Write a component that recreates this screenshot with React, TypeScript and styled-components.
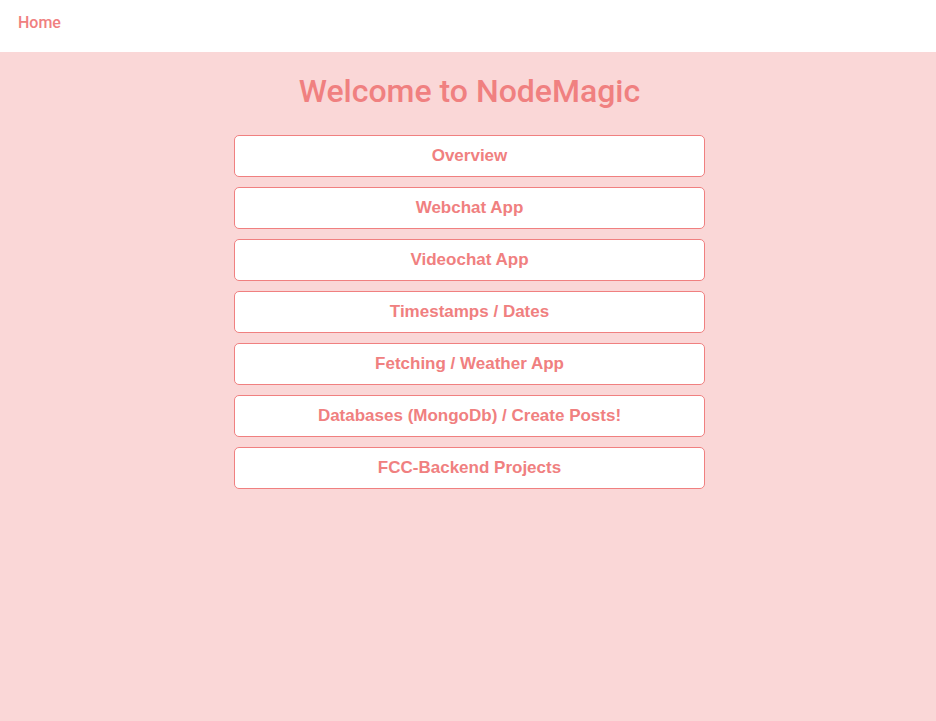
import React from 'react';
import styled, { createGlobalStyle } from 'styled-components';

const GlobalStyle = createGlobalStyle`
  html, body {
    margin: 0;
    padding: 0;
    background: #fad7d7;
  }
  body {
    font-family: Roboto, "Liberation Sans", sans-serif;
  }
`;

const NavBar = styled.nav`
  display: flex;
  align-items: center;
  height: 52px;
  padding: 0 18px;
  background: #ffffff;
`;

const NavLink = styled.a`
  color: #f08080;
  font-family: Roboto, sans-serif;
  font-size: 16px;
  font-weight: 500;
  text-decoration: none;
  margin-top: -7px;
`;

const Main = styled.main`
  display: flex;
  flex-direction: column;
  align-items: center;
  padding-left: 3px;
`;

const Title = styled.h1`
  margin: 20px 0 25px;
  color: #f08080;
  font-family: Roboto, sans-serif;
  font-size: 32px;
  font-weight: 500;
  line-height: 38px;
`;

const MenuList = styled.div`
  display: flex;
  flex-direction: column;
  gap: 10px;
  width: 471px;
`;

const MenuButton = styled.button`
  height: 42px;
  width: 100%;
  background: #ffffff;
  border: 1px solid #f08080;
  border-radius: 5px;
  color: #f08080;
  font-family: "Liberation Sans", Arial, sans-serif;
  font-size: 17px;
  font-weight: 700;
  cursor: pointer;
`;

const items = [
  'Overview',
  'Webchat App',
  'Videochat App',
  'Timestamps / Dates',
  'Fetching / Weather App',
  'Databases (MongoDb) / Create Posts!',
  'FCC-Backend Projects',
];

const App: React.FC = () => (
  <>
    <GlobalStyle />
    <NavBar>
      <NavLink href="#">Home</NavLink>
    </NavBar>
    <Main>
      <Title>Welcome to NodeMagic</Title>
      <MenuList>
        {items.map((label) => (
          <MenuButton key={label}>{label}</MenuButton>
        ))}
      </MenuList>
    </Main>
  </>
);

export default App;
